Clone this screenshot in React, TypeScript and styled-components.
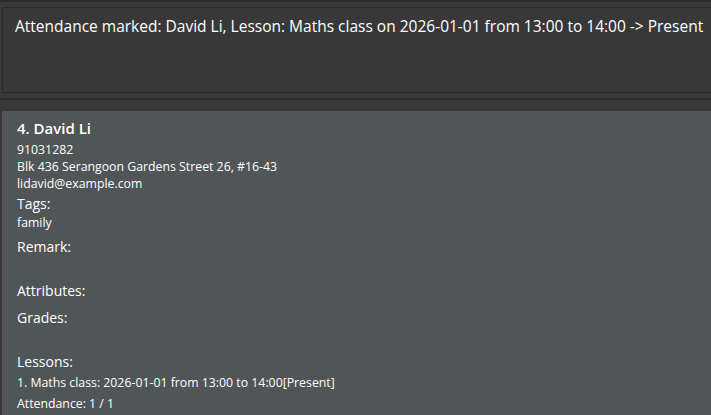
import React from "react";
import styled, { createGlobalStyle } from "styled-components";

const Global = createGlobalStyle`
  html, body { margin: 0; padding: 0; background: #383838; }
  body { font-family: "Open Sans", "Noto Sans", sans-serif; overflow: hidden; }
`;

const Page = styled.div`
  width: 711px;
  height: 415px;
  overflow: hidden;
  display: flex;
  flex-direction: column;
  background: #383838;
  border-top: 2px solid #2c2c2c;
  box-sizing: border-box;
`;

const ResultArea = styled.div`
  padding: 5px 0 5px 2px;
  border-bottom: 2px solid #2c2c2c;
`;

const ResultBox = styled.div`
  height: 86px;
  margin-right: -4px;
  border: 1px solid #2a2a2a;
  box-sizing: border-box;
  padding: 8px 12px;
  color: #ffffff;
  font-size: 15.5px;
  line-height: 20px;
  white-space: nowrap;
`;

const ListArea = styled.div`
  flex: 1;
  padding-top: 11px;
  display: flex;
  flex-direction: column;
`;

const Card = styled.div`
  flex: 1;
  margin-left: 2px;
  background: #505558;
  padding: 7px 15px;
  color: #ffffff;
  display: flex;
  flex-direction: column;
`;

const Name = styled.div`
  font-size: 15px;
  font-weight: 600;
  line-height: 20px;
  margin-bottom: 3px;
`;

const Detail = styled.div<{ $gap?: number }>`
  font-size: 12.3px;
  line-height: 17px;
  margin-top: ${(p) => p.$gap ?? 0}px;
`;

const Heading = styled.div<{ $gap?: number }>`
  font-size: 14px;
  line-height: 19px;
  margin-top: ${(p) => p.$gap ?? 0}px;
`;

const Lesson = styled.div<{ $gap?: number }>`
  font-size: 12.3px;
  line-height: 20px;
  margin-top: ${(p) => p.$gap ?? 0}px;
`;

export default function App() {
  return (
    <>
      <Global />
      <Page>
        <ResultArea>
          <ResultBox>
            Attendance marked: David Li, Lesson: Maths class on 2026-01-01 from 13:00 to 14:00 -&gt; Present
          </ResultBox>
        </ResultArea>
        <ListArea>
          <Card>
            <Name>4. David Li</Name>
            <Detail>91031282</Detail>
            <Detail>Blk 436 Serangoon Gardens Street 26, #16-43</Detail>
            <Detail>lidavid@example.com</Detail>
            <Heading $gap={2}>Tags:</Heading>
            <Detail $gap={1}>family</Detail>
            <Heading $gap={6}>Remark:</Heading>
            <Heading $gap={25}>Attributes:</Heading>
            <Heading $gap={8}>Grades:</Heading>
            <Heading $gap={25}>Lessons:</Heading>
            <Lesson $gap={2}>1. Maths class: 2026-01-01 from 13:00 to 14:00[Present]</Lesson>
            <Lesson $gap={1}>Attendance: 1 / 1</Lesson>
          </Card>
        </ListArea>
      </Page>
    </>
  );
}
